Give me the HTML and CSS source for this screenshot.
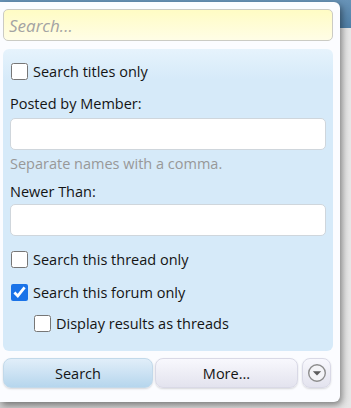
FILE: index.html
```html
<!DOCTYPE html>
<html lang="en">

<head>
  <meta charset="UTF-8">
  <meta name="viewport" content="width=device-width, initial-scale=1.0">
  <title>Search</title>

  <!-- styles -->
  <link rel="stylesheet" href="styles.css">
</head>

<body>
  <div class="search-menu">
    <input class="search-box" type="text" placeholder="Search...">

    <div class="options">
      <label class="check-row">
        <input type="checkbox">
        <span>Search titles only</span>
      </label>

      <div class="field-label">Posted by Member:</div>
      <input class="text-field" type="text">
      <div class="hint">Separate names with a comma.</div>

      <div class="field-label newer">Newer Than:</div>
      <input class="text-field newer-field" type="text">

      <label class="check-row thread-row">
        <input type="checkbox">
        <span>Search this thread only</span>
      </label>
      <label class="check-row">
        <input type="checkbox" checked>
        <span>Search this forum only</span>
      </label>
      <label class="check-row sub-row">
        <input type="checkbox">
        <span>Display results as threads</span>
      </label>
    </div>

    <div class="buttons">
      <button class="btn primary">Search</button>
      <button class="btn">More...</button>
      <button class="btn arrow">
        <svg width="20" height="20" viewBox="0 0 20 20">
          <circle cx="10" cy="10" r="8.3" fill="#f4f4f7" stroke="#8d8d8d" stroke-width="1.4"/>
          <path d="M5.8 8.2 L14.2 8.2 L10 12.6 Z" fill="#5c5c5c"/>
        </svg>
      </button>
    </div>
  </div>
</body>

</html>
```

FILE: styles.css
```css
* {
  margin: 0;
  padding: 0;
  box-sizing: border-box;
  outline: none;
  font-family: "Open Sans", "Lato", sans-serif;
}

body {
  width: 351px;
  height: 408px;
  overflow: hidden;
  padding-top: 2px;
  background:
    linear-gradient(to bottom, #6893b7 0, #4f7fa6 28px, transparent 28px),
    linear-gradient(to right, #cfcfcf, #e6e6e6);
}

.search-menu {
  width: 340px;
  height: 400px;
  padding: 7px 7px 0 3px;
  background-color: #fbfcff;
  border-radius: 0 6px 6px 0;
  box-shadow: 2px 3px 7px rgba(0, 0, 0, 0.45);
}

.search-box {
  display: block;
  width: 330px;
  height: 32px;
  padding: 0 5px;
  font-size: 17px;
  color: #222;
  border: 1px solid #cbcbc4;
  border-radius: 5px;
  background: linear-gradient(#fffcc4, #fffde6);
}

.search-box::placeholder {
  color: #a3a3a3;
  font-style: italic;
}

.options {
  margin-top: 8px;
  width: 330px;
  height: 302px;
  padding: 8px 7px 0 7px;
  border-radius: 6px;
  background: linear-gradient(#e6f3fc 0, #d6eaf9 30px, #d6eaf9 100%);
  color: #141414;
  font-size: 14.5px;
}

.check-row {
  display: flex;
  align-items: center;
  gap: 5px;
  height: 28px;
}

.check-row input {
  width: 17px;
  height: 17px;
  margin: 0 0 0 1px;
  accent-color: #1a73e8;
}

.field-label {
  margin-top: 9px;
  line-height: 20px;
}

.text-field {
  display: block;
  width: 316px;
  height: 32px;
  margin-top: 4px;
  border: 1px solid #cfd6dc;
  border-radius: 5px;
  background-color: #fff;
}

.hint {
  margin-top: 4px;
  line-height: 20px;
  color: #989898;
}

.field-label.newer {
  margin-top: 8px;
}

.newer-field {
  margin-top: 2px;
}

.thread-row {
  margin-top: 9px;
}

.check-row + .check-row {
  margin-top: 5px;
}

.sub-row {
  margin-left: 23px;
}

.sub-row.check-row {
  margin-top: 3px;
}

.buttons {
  display: flex;
  margin-top: 7px;
  gap: 2px;
}

.btn {
  height: 30px;
  width: 143px;
  font-size: 14.5px;
  color: #141414;
  border: 1px solid #d9d9e6;
  border-radius: 8px;
  background: linear-gradient(#f8f8fd, #e3e3ee);
  box-shadow: 0 1px 2px rgba(0, 0, 0, 0.15);
  cursor: pointer;
}

.btn.primary {
  width: 150px;
  border-color: #c2d9ea;
  background: linear-gradient(#e1eef9, #b6d6ed);
}

.btn.arrow {
  width: 29px;
  margin-left: 2px;
  display: flex;
  align-items: center;
  justify-content: center;
}
```
